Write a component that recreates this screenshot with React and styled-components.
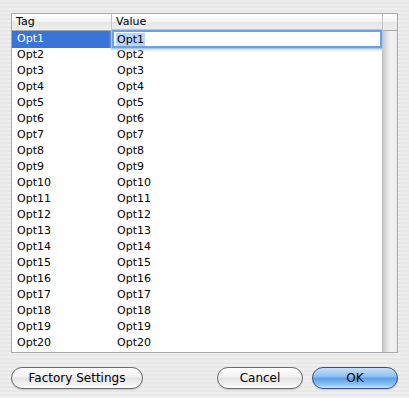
import React from 'react'
import styled, { createGlobalStyle } from 'styled-components'

const Global = createGlobalStyle`
  html, body {
    margin: 0;
    padding: 0;
  }
  body {
    width: 409px;
    height: 398px;
    overflow: hidden;
    font-family: "DejaVu Sans", "Liberation Sans", sans-serif;
    background: repeating-linear-gradient(to bottom, #efefef 0 2px, #e7e7e7 2px 4px);
  }
`

const Dialog = styled.div`
  display: flex;
  flex-direction: column;
  padding: 13px 11px 0 11px;
  height: 398px;
  box-sizing: border-box;
`

const Table = styled.div`
  display: flex;
  flex-direction: column;
  width: 387px;
  height: 340px;
  box-sizing: border-box;
  border: 1px solid #a8a8a8;
  background: #fff;
`

const Header = styled.div`
  display: grid;
  grid-template-columns: 100px 1fr 14px;
  height: 16px;
  border-bottom: 1px solid #a8a8a8;
  background: linear-gradient(to bottom, #ffffff 0%, #f3f3f3 50%, #e6e6e6 51%, #efefef 100%);
`

const HeadCell = styled.div`
  font-size: 11px;
  line-height: 16px;
  padding-left: 4px;
  color: #000;
  border-right: ${p => (p.last ? 'none' : '1px solid #c4c4c4')};
`

const Body = styled.div`
  display: flex;
  flex: 1;
  min-height: 0;
`

const Rows = styled.div`
  flex: 1;
  display: flex;
  flex-direction: column;
`

const Row = styled.div`
  display: grid;
  grid-template-columns: 100px 1fr;
  height: 16px;
`

const Cell = styled.div`
  font-size: 11px;
  line-height: 16px;
  padding-left: 5px;
  color: ${p => (p.selected ? '#fff' : '#000')};
  background: ${p => (p.selected ? '#3875d7' : 'transparent')};
  white-space: nowrap;
`

const Editor = styled.div`
  height: 18px;
  margin-top: -1px;
  box-sizing: border-box;
  border: 2px solid #6e9fe0;
  box-shadow: 0 0 0 1px #a9c7ef, 0 1px 2px 1px #b9d2f3;
  background: #fff;
  padding-left: 2px;
  display: flex;
  align-items: center;
  position: relative;
  z-index: 1;
`

const Selection = styled.span`
  font-size: 11px;
  line-height: 13px;
  background: #b5d5ff;
  color: #000;
  padding: 0 1px;
`

const Scrollbar = styled.div`
  width: 14px;
  border-left: 1px solid #bdbdbd;
  background: linear-gradient(to right, #c9c9c9 0%, #e4e4e4 30%, #f3f3f3 60%, #eaeaea 100%);
`

const Buttons = styled.div`
  display: flex;
  align-items: center;
  margin-top: 14px;
  gap: 9px;
`

const Spacer = styled.div`
  flex: 1;
`

const Button = styled.button`
  height: 22px;
  width: ${p => p.w}px;
  border-radius: 11px;
  font-family: "DejaVu Sans", "Liberation Sans", sans-serif;
  font-size: 12px;
  color: #000;
  padding: 0;
  border: 1px solid ${p => (p.primary ? '#3a4f8a' : '#6b6b6b')};
  background: ${p =>
    p.primary
      ? 'linear-gradient(to bottom, #c8e0fb 0%, #8bbef3 45%, #5c9eea 50%, #8cc5f8 85%, #c9ecff 100%)'
      : 'linear-gradient(to bottom, #ffffff 0%, #f2f2f2 45%, #e3e3e3 50%, #f4f4f4 85%, #ffffff 100%)'};
  box-shadow: 0 1px 1px rgba(0, 0, 0, 0.15);
`

const items = Array.from({ length: 20 }, (_, i) => `Opt${i + 1}`)

export default function App() {
  return (
    <>
      <Global />
      <Dialog>
        <Table>
          <Header>
            <HeadCell>Tag</HeadCell>
            <HeadCell>Value</HeadCell>
            <HeadCell last />
          </Header>
          <Body>
            <Rows>
              {items.map((name, i) => (
                <Row key={name}>
                  <Cell selected={i === 0}>{name}</Cell>
                  {i === 0 ? (
                    <Editor>
                      <Selection>{name}</Selection>
                    </Editor>
                  ) : (
                    <Cell>{name}</Cell>
                  )}
                </Row>
              ))}
            </Rows>
            <Scrollbar />
          </Body>
        </Table>
        <Buttons>
          <Button w={132}>Factory Settings</Button>
          <Spacer />
          <Button w={86}>Cancel</Button>
          <Button w={86} primary>OK</Button>
        </Buttons>
      </Dialog>
    </>
  )
}
